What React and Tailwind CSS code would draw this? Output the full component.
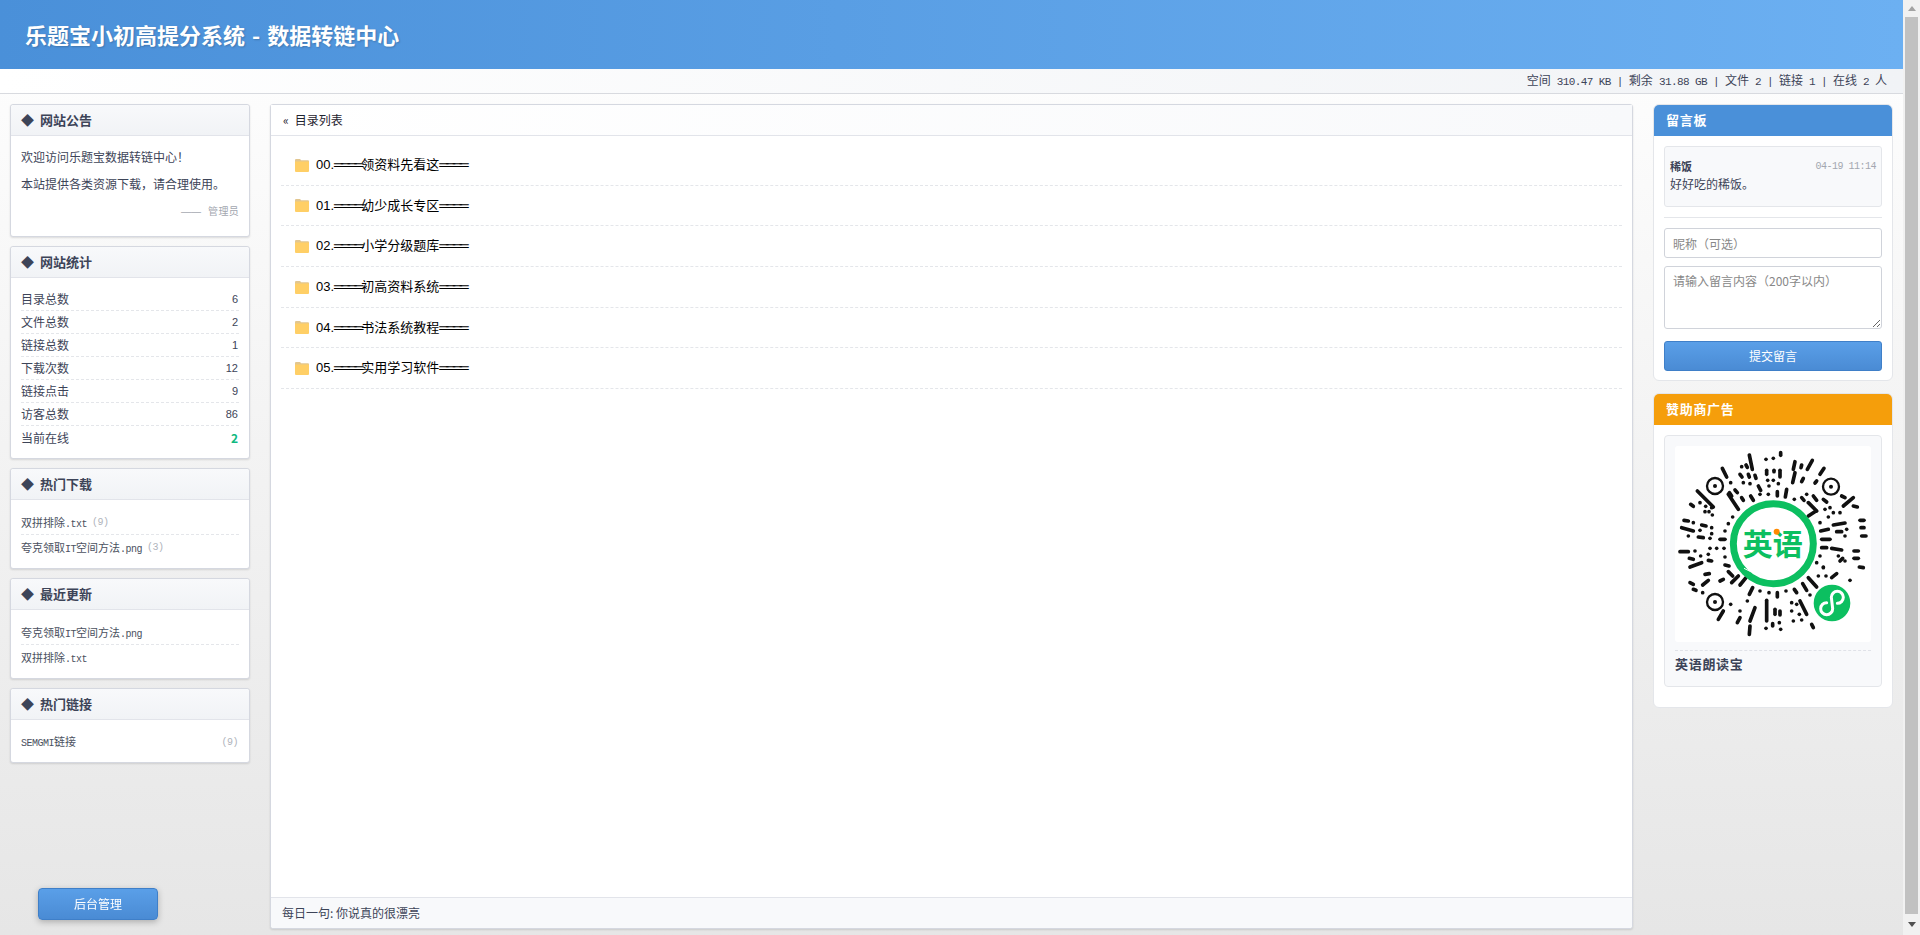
const SANS = "font-['Liberation_Sans','Noto_Sans_CJK_SC',sans-serif]";

function M({ children, className = "" }) {
  return <span className={"font-['Liberation_Mono',monospace] text-[11px] tracking-[-0.6px] " + className}>{children}</span>;
}

function S({ children, className = "" }) {
  return <span className={"font-['Liberation_Mono',monospace] text-[10px] tracking-[-0.5px] " + className}>{children}</span>;
}

function Card({ title, children, bodyClass = "" }) {
  return (
    <section className="bg-white border border-[#d5d8e0] rounded-[3px] shadow-[0_1px_2px_rgba(0,0,0,0.12)]">
      <h3 className="h-[31px] flex items-center pl-[10px] pb-[1px] gap-[6px] bg-gradient-to-b from-[#f8f9fb] to-[#f1f3f6] border-b border-[#e2e4ea] rounded-t-[3px] text-[13px] font-bold text-[#3d4458]">
        <span className="text-[13px] text-[#3d4458] leading-none">◆</span>
        <span>{title}</span>
      </h3>
      <div className={bodyClass}>{children}</div>
    </section>
  );
}

function StatRow({ label, value, last, green }) {
  return (
    <div className={"h-[23px] flex items-center justify-between text-[12px] text-[#3d4458] " + (last ? "" : "border-b border-dashed border-[#e4e6ea]")}>
      <span>{label}</span>
      <span className={green ? "font-bold text-[#10b981] pr-px" : "font-['Liberation_Sans'] text-[11px] pr-px"}>{value}</span>
    </div>
  );
}

function FolderIcon() {
  return (
    <svg width="14" height="14" viewBox="0 0 14 14" className="shrink-0">
      <path d="M0 2.2 Q0 1 1 1 H5 L6.2 2.2 H13 Q14 2.2 14 3.2 V5 H0 Z" fill="#e2c68f" />
      <path d="M0 3.4 H14 V13 Q14 14 13 14 H1 Q0 14 0 13 Z" fill="#ffcf66" />
    </svg>
  );
}

const DIRS = [
  ["00.", "领资料先看这"],
  ["01.", "幼少成长专区"],
  ["02.", "小学分级题库"],
  ["03.", "初高资料系统"],
  ["04.", "书法系统教程"],
  ["05.", "实用学习软件"],
];

function DirRow({ no, name }) {
  return (
    <div className="h-[40.67px] flex items-center pl-[14px] gap-[7px] border-b border-dashed border-[#e4e6ea]">
      <FolderIcon />
      <span className={SANS + " text-[13px] text-black whitespace-nowrap"}>
        {no}
        <span className="tracking-[-2.45px]">════</span>
        {name}
        <span className="tracking-[-2.45px]">════</span>
      </span>
    </div>
  );
}

const BARS = [
  [268,42,277,85],[362,35,362,43],[318,55,318,55],[340,52,340,52],[245,77,245,77],[258,72,262,79],[405,62,400,85],[425,72,423,80],[457,58,442,85],
  [320,88,320,100],[342,88,342,92],[360,88,360,108],[240,100,246,108],[265,100,268,108],[285,103,288,112],[405,95,398,125],[430,112,425,122],[323,118,323,118],[340,118,340,118],[355,128,355,128],
  [250,125,250,125],[270,128,270,128],[295,135,302,148],[327,135,327,135],[492,82,480,100],[470,120,465,126],[187,82,200,108],[212,125,212,125],
  [92,190,100,196],[112,150,160,198],[120,185,120,185],[137,196,137,196],[147,212,147,212],[157,222,157,222],[135,212,135,212],[155,200,155,200],
  [205,160,235,205],[225,147,232,155],[245,170,250,178],[272,165,280,178],[208,155,215,165],[300,160,300,160],[325,160,325,160],[352,152,352,165],[380,145,376,168],
  [403,175,403,175],[425,170,432,178],[460,165,470,178],[445,185,470,210],[445,225,468,210],[440,160,440,160],[490,175,500,183],[495,205,495,205],[510,200,510,200],[520,215,520,215],[540,215,540,215],[505,228,505,228],
  [545,165,555,170],[550,195,580,170],[580,195,592,198],
  [600,238,612,238],[603,260,612,260],[605,285,618,285],[520,252,555,246],[530,272,545,272],[482,270,505,265],[485,295,510,295],[560,265,560,265],[555,285,555,285],[480,245,480,245],
  [485,320,500,320],[515,322,545,327],[582,330,595,330],[582,352,595,352],[598,378,610,380],[535,345,535,345],[555,360,555,360],[540,360,548,352],[480,345,480,345],[470,365,470,365],[490,378,490,378],
  [72,238,85,240],[65,260,100,270],[125,252,138,255],[115,288,130,290],[120,268,120,268],[85,285,85,285],[155,260,155,260],[155,278,155,278],[150,292,150,292],[180,295,195,295],[205,248,205,248],[195,270,195,270],[218,228,218,228],[100,245,100,245],
  [60,332,85,332],[105,330,105,330],[88,352,100,355],[90,378,125,365],[145,358,155,360],[122,345,122,345],[145,340,145,340],[170,322,170,322],[192,322,192,322],[195,348,195,348],[195,372,207,375],[150,322,150,322],
  [90,425,100,430],[128,432,145,418],[135,400,148,398],[100,445,108,448],[128,455,128,455],[180,420,190,415],[205,392,218,405],[215,425,235,405],[240,432,258,410],[268,460,278,440],
  [300,450,300,450],[327,455,327,455],[352,455,352,468],[378,450,378,450],[403,445,410,455],[428,428,440,448],[445,410,470,438],[475,405,475,405],[490,380,490,380],[498,405,498,405],[515,410,530,398],[570,418,570,418],[450,462,450,462],
  [190,510,175,535],[212,490,212,490],[262,480,262,480],[240,510,240,510],[285,500,270,540],[240,530,232,545],[320,478,320,540],[345,505,345,520],[360,510,360,522],[338,548,338,555],[358,545,358,545],
  [270,555,268,580],[318,562,318,562],[362,565,362,565],[395,485,395,485],[420,480,440,520],[395,510,395,510],[410,490,410,490],[418,520,418,520],[400,540,400,540],[425,537,425,537],[455,550,460,560],
];

function QRCode() {
  return (
    <svg viewBox="45 15 588 588" className="w-[196px] h-[196px] block">
      <rect x="45" y="15" width="588" height="588" fill="#ffffff" />
      <g stroke="#111" strokeWidth="11" strokeLinecap="round" fill="none">
        {BARS.map((b, i) => (
          <line key={i} x1={b[0]} y1={b[1]} x2={b[2]} y2={b[3]} />
        ))}
        <circle cx="165" cy="135" r="24" strokeWidth="7" />
        <circle cx="513" cy="137" r="24" strokeWidth="7" />
        <circle cx="165" cy="483" r="24" strokeWidth="7" />
      </g>
      <circle cx="165" cy="135" r="6" fill="#111" />
      <circle cx="513" cy="137" r="6" fill="#111" />
      <circle cx="165" cy="483" r="6" fill="#111" />
      <circle cx="340" cy="308" r="120" fill="#fff" stroke="#0cbf60" strokeWidth="21" />
      <path d="M252 382 L272 392" stroke="#fff" strokeWidth="3" />
      <text x="338" y="342" textAnchor="middle" fontSize="90" fontWeight="700" fill="#0cbf60" fontFamily="'Noto Sans CJK SC',sans-serif">英语</text>
      <circle cx="350" cy="272" r="9" fill="#ff8a00" />
      <circle cx="516" cy="486" r="55" fill="#0cbf60" />
      <path d="M500 485 A18 18 0 1 0 518 503 L514 469 A18 18 0 1 1 532 487" fill="none" stroke="#fff" strokeWidth="9" strokeLinecap="round" />
    </svg>
  );
}

function Scrollbar() {
  return (
    <div className="w-[17px] shrink-0 bg-[#f1f1f1] flex flex-col items-center">
      <div className="h-[17px] w-full flex items-center justify-center">
        <svg width="8" height="5" viewBox="0 0 8 5"><path d="M4 0 L8 5 H0 Z" fill="#a3a3a3" /></svg>
      </div>
      <div className="flex-1 w-[13px] bg-[#c1c1c1]" />
      <div className="h-[21px] w-full flex items-center justify-center">
        <svg width="8" height="5" viewBox="0 0 8 5"><path d="M0 0 H8 L4 5 Z" fill="#505050" /></svg>
      </div>
    </div>
  );
}

export default function App() {
  return (
    <div className="h-[935px] w-full flex overflow-hidden font-['Noto_Sans_CJK_SC',sans-serif] text-[#3d4458]">
      <div className="flex-1 min-w-0 flex flex-col bg-gradient-to-b from-white to-[#e6e6e6]">
        <header className="h-[69px] shrink-0 flex items-center pl-[25px] pb-[1px] bg-gradient-to-r from-[#4a90d9] to-[#6cb0f2]">
          <h1 className="text-[22px] font-bold text-white [word-spacing:2px] [text-shadow:1px_1px_2px_rgba(0,0,0,0.2)]">乐题宝小初高提分系统 - 数据转链中心</h1>
        </header>
        <div className="h-[25px] shrink-0 flex items-center justify-end pr-[16px] bg-gradient-to-r from-white to-[#f1f3f6] border-b border-[#d8dadf] text-[12px] text-[#3d4458] whitespace-pre">
          <span>空间<M> 310.47 KB | </M>剩余<M> 31.88 GB | </M>文件<M> 2 | </M>链接<M> 1 | </M>在线<M> 2 </M>人</span>
        </div>
        <div className="flex-1 min-h-0 flex gap-[20px] px-[10px] pt-[10px] pb-[6px]">
          <aside className="w-[240px] shrink-0 flex flex-col gap-[9px]">
            <Card title="网站公告" bodyClass="px-[10px] pt-[10px] h-[100px] text-[12px] text-[#3d4458]">
              <p className="h-[27px] leading-[22px]">欢迎访问乐题宝数据转链中心！</p>
              <p className="h-[27px] leading-[22px]">本站提供各类资源下载，请合理使用。</p>
              <p className="text-right text-[10px] text-[#a3a7b0] leading-[16px] pt-[3px] whitespace-pre"><span className="font-['Liberation_Sans'] mr-[7px]">——</span><span className="tracking-[0.3px]">管理员</span></p>
            </Card>
            <Card title="网站统计" bodyClass="px-[10px] pt-[10px] pb-[9px]">
              <StatRow label="目录总数" value="6" />
              <StatRow label="文件总数" value="2" />
              <StatRow label="链接总数" value="1" />
              <StatRow label="下载次数" value="12" />
              <StatRow label="链接点击" value="9" />
              <StatRow label="访客总数" value="86" />
              <StatRow label="当前在线" value="2" last green />
            </Card>
            <Card title="热门下载" bodyClass="px-[10px] pt-[11px] pb-[8px] text-[11px] text-[#4b5160]">
              <div className="h-[24px] flex items-center border-b border-dashed border-[#e4e6ea] gap-[5px]">
                <span>双拼排除<S>.txt</S></span><S className="text-[#b0b4bc]">(9)</S>
              </div>
              <div className="h-[25px] flex items-center gap-[5px]">
                <span>夸克领取<S>IT</S>空间方法<S>.png</S></span><S className="text-[#b0b4bc]">(3)</S>
              </div>
            </Card>
            <Card title="最近更新" bodyClass="px-[10px] pt-[11px] pb-[8px] text-[11px] text-[#4b5160]">
              <div className="h-[24px] flex items-center border-b border-dashed border-[#e4e6ea]">
                <span>夸克领取<S>IT</S>空间方法<S>.png</S></span>
              </div>
              <div className="h-[25px] flex items-center">
                <span>双拼排除<S>.txt</S></span>
              </div>
            </Card>
            <Card title="热门链接" bodyClass="px-[10px] pt-[10px] pb-[8px] text-[11px] text-[#4b5160]">
              <div className="h-[24px] flex items-center justify-between pr-[1px]">
                <span><S>SEMGMI</S>链接</span><S className="text-[#b0b4bc]">(9)</S>
              </div>
            </Card>
          </aside>

          <main className="flex-1 min-w-0 flex flex-col bg-white border border-[#d5d8e0] rounded-[3px] shadow-[0_1px_2px_rgba(0,0,0,0.12)]">
            <div className="h-[31px] shrink-0 flex items-center pl-[12px] gap-[6px] bg-gradient-to-r from-white to-[#f8f9fb] border-b border-[#e2e4ea] text-[12px] text-[#1f2430]">
              <span>«</span><span>目录列表</span>
            </div>
            <div className="flex-1 min-h-0 px-[10px] pt-[9px]">
              {DIRS.map((d) => (
                <DirRow key={d[0]} no={d[0]} name={d[1]} />
              ))}
            </div>
            <div className="h-[31px] shrink-0 flex items-center pl-[11px] bg-[#f8f9fb] border-t border-[#e2e4ea] text-[12px] text-[#3d4458] rounded-b-[3px]">
              每日一句: 你说真的很漂亮
            </div>
          </main>

          <aside className="w-[240px] shrink-0 flex flex-col gap-[12px]">
            <section className="bg-white border border-[#e4e6ea] rounded-[6px] overflow-hidden">
              <h3 className="h-[31px] flex items-center pl-[12px] pb-[2px] bg-[#4a90d9] text-white text-[13px] font-bold tracking-[0.7px]">留言板</h3>
              <div className="p-[10px] pb-[9px]">
                <div className="h-[61px] bg-[#f8f9fb] border border-[#e4e6ea] rounded-[3px] px-[5px] pt-[10px]">
                  <div className="flex items-center justify-between h-[18px]">
                    <span className="text-[11px] font-bold text-[#3d4458]">稀饭</span>
                    <S className="text-[#a3a7b0]">04-19 11:14</S>
                  </div>
                  <div className="text-[12px] leading-[18px] text-[#3d4458]">好好吃的稀饭。</div>
                </div>
                <div className="my-[10px] border-t border-[#e4e6ea]" />
                <input placeholder="昵称（可选）" className="block w-full h-[30px] px-[8px] bg-white border border-[#d0d3da] rounded-[3px] text-[12px] outline-none placeholder:text-[#888]" />
                <textarea placeholder="请输入留言内容（200字以内）" className="block w-full h-[63px] mt-[8px] px-[8px] py-[5px] bg-white border border-[#d0d3da] rounded-[3px] text-[12px] leading-[18px] outline-none placeholder:text-[#888]" />
                <button className="block w-full h-[30px] mt-[12px] bg-gradient-to-b from-[#5a9fe8] to-[#4a8bd4] border border-[#3f7fc8] rounded-[3px] text-[12px] text-white">提交留言</button>
              </div>
            </section>
            <section className="bg-white border border-[#e4e6ea] rounded-[6px] overflow-hidden">
              <h3 className="h-[31px] flex items-center pl-[12px] pb-[2px] bg-[#f59e0b] text-white text-[13px] font-bold tracking-[0.7px]">赞助商广告</h3>
              <div className="p-[10px] pb-[20px]">
                <div className="h-[252px] bg-[#f8f9fb] border border-[#e4e6ea] rounded-[4px] p-[10px]">
                  <div className="rounded-[3px] overflow-hidden"><QRCode /></div>
                  <div className="mt-[8px] border-t border-dashed border-[#e0e2e8] pt-[3px] text-[13px] font-bold tracking-[0.7px] text-[#3d4458] leading-[20px]">英语朗读宝</div>
                </div>
              </div>
            </section>
          </aside>
        </div>
      </div>
      <Scrollbar />
      <button className="fixed left-[38px] top-[888px] w-[120px] h-[32px] bg-gradient-to-b from-[#5a9fe8] to-[#4a8bd4] border border-[#3f7fc8] rounded-[4px] text-[12px] text-white shadow-[0_2px_6px_rgba(0,0,0,0.25)]">后台管理</button>
    </div>
  );
}
